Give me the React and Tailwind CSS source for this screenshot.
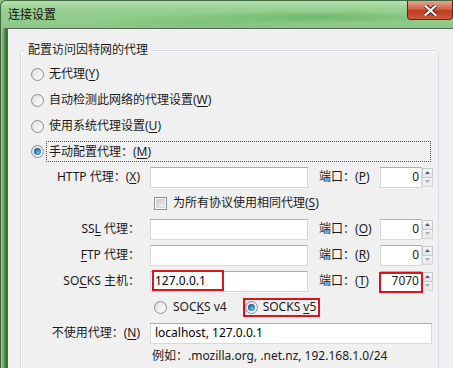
import React from "react";

const U = ({ children }) => <span className="underline underline-offset-[2px]">{children}</span>;

function Radio({ checked }) {
  return (
    <div className="w-[13px] h-[13px] shrink-0 rounded-full border border-[#8e8f8f] bg-[linear-gradient(135deg,#dcdcdc,#f8f8f8)] flex items-center justify-center">
      <div className="w-[9px] h-[9px] rounded-full bg-[linear-gradient(135deg,#e4e4e4,#fbfbfb)] flex items-center justify-center">
        {checked && (
          <div className="w-[7px] h-[7px] rounded-full bg-[radial-gradient(circle_at_60%_65%,#7cc8ef_0%,#2a7fb8_45%,#103d63_100%)]" />
        )}
      </div>
    </div>
  );
}

function Checkbox() {
  return (
    <div className="w-[13px] h-[13px] shrink-0 border border-[#8e8f8f] bg-white flex items-center justify-center">
      <div className="w-[9px] h-[9px] bg-[linear-gradient(135deg,#c9cbce,#eef0f1)] border border-[#d3d5d7]" />
    </div>
  );
}

function TextBox({ children, className = "", w }) {
  return (
    <div
      className={
        "h-[21px] bg-white border border-[#d6d9dd] border-t-[#abadb3] flex items-center pl-[4px] text-[#000] " +
        w +
        " " +
        className
      }
    >
      {children}
    </div>
  );
}

function Spinner() {
  return (
    <div className="w-[11px] h-[19px] flex flex-col ml-auto mr-[0px]">
      <div className="h-[10px] border border-[#c6c9cc] bg-[linear-gradient(#f7f7f7,#e3e5e8)] flex items-center justify-center">
        <svg width="5" height="3" viewBox="0 0 5 3"><path d="M0 3 L2.5 0 L5 3 Z" fill="#4a5f86" /></svg>
      </div>
      <div className="h-[9px] border border-t-0 border-[#d6d8da] bg-[linear-gradient(#f3f3f3,#e8e8e8)] flex items-center justify-center">
        <svg width="5" height="3" viewBox="0 0 5 3"><path d="M0 0 L2.5 3 L5 0 Z" fill="#a8aeb6" /></svg>
      </div>
    </div>
  );
}

function PortBox({ value, red }) {
  return (
    <div className="relative w-[53px] h-[21px] flex items-center">
      <div className="w-[42px] h-[21px] bg-white border border-[#d6d9dd] border-t-[#abadb3] flex items-center justify-end pr-[2px]">
        {value}
      </div>
      <Spinner />
      {red && (
        <div className="absolute left-[-1px] top-[1px] w-[44px] h-[21px] border-2 border-[#d9141c]" />
      )}
    </div>
  );
}

function FieldRow({ label, port, value, red }) {
  return (
    <div className="h-[26px] flex items-center">
      <div className="w-[119px] text-right whitespace-nowrap">{label}</div>
      <div className="ml-[10px] relative">
        <TextBox w="w-[158px]">{red ? "127.0.0.1" : null}</TextBox>
        {red && <div className="absolute left-[2px] top-[-1px] w-[72px] h-[21px] border-2 border-[#d9141c]" />}
      </div>
      <div className="ml-[11px] w-[61px] whitespace-nowrap">端口：{port}</div>
      <PortBox value={value} red={red} />
    </div>
  );
}

export default function App() {
  return (
    <div
      className="w-[453px] h-[368px] overflow-hidden flex flex-col text-[12px] leading-[16px] text-[#1a1a1a] bg-[#8fc98a]"
      style={{ fontFamily: '"Noto Sans", "Noto Sans CJK SC", sans-serif' }}
    >
      {/* Title bar */}
      <div className="h-[28px] shrink-0 flex items-start rounded-tl-[6px] border-l border-t border-[#3f6a3f] bg-[radial-gradient(ellipse_at_70%_60%,#6fb86a_0%,transparent_30%),radial-gradient(ellipse_at_45%_80%,#7ec27a_0%,transparent_35%),linear-gradient(#b9e0b2,#98d092_30%,#8cc887)]">
        <div className="pl-[7px] pt-[6px] text-[#111]">连接设置</div>
        <div className="ml-auto w-[46px] h-[19px] rounded-b-[4px] border border-t-0 border-[#5e2619] bg-[linear-gradient(#e7a592,#d4634a_45%,#c0391f_55%,#cf5a3c)] flex items-center justify-center">
          <svg width="13" height="11" viewBox="0 0 13 11">
            <path d="M1.5 1 L11.5 10 M11.5 1 L1.5 10" stroke="#3b1a12" strokeWidth="4" strokeLinecap="square" />
            <path d="M1.5 1 L11.5 10 M11.5 1 L1.5 10" stroke="#fff" strokeWidth="2.2" strokeLinecap="square" />
          </svg>
        </div>
      </div>

      {/* Body */}
      <div className="flex flex-1 min-h-0">
        <div className="w-[7px] shrink-0 border-l border-[#3c5f3c] bg-[linear-gradient(90deg,#a9d3a3,#6aab65_40%,#3f7a3c_80%,#2d5a2d)]" />
        <div className="flex-1 bg-[#f0f0f0] border-l border-t border-[#5a6b5a] pt-[13px] pl-[12px]">
          <fieldset className="w-[419px] border border-[#d5dfe5] rounded-[3px] shadow-[inset_1px_1px_0_#fff] h-[400px]">
            <legend className="ml-[4px] px-[3px] leading-[16px]">配置访问因特网的代理</legend>
            <div className="pt-[3px]">
              <div className="h-[26px] flex items-center pl-[10px]">
                <Radio />
                <span className="ml-[5px]">无代理(<U>Y</U>)</span>
              </div>
              <div className="h-[26px] flex items-center pl-[10px]">
                <Radio />
                <span className="ml-[5px]">自动检测此网络的代理设置(<U>W</U>)</span>
              </div>
              <div className="h-[26px] flex items-center pl-[10px]">
                <Radio />
                <span className="ml-[5px]">使用系统代理设置(<U>U</U>)</span>
              </div>
              <div className="h-[25px] flex items-center pl-[10px] pr-[7px]">
                <Radio checked />
                <div className="ml-[2px] flex-1 h-[21px] border border-dotted border-[#555] pl-[2px] flex items-center">
                  手动配置代理：(<U>M</U>)
                </div>
              </div>

              <FieldRow label={<>HTTP 代理：(<U>X</U>)</>} port={<>(<U>P</U>)</>} value="0" />

              <div className="h-[26px] flex items-center pl-[133px]">
                <Checkbox />
                <span className="ml-[6px]">为所有协议使用相同代理(<U>S</U>)</span>
              </div>

              <FieldRow label={<>SS<U>L</U> 代理：</>} port={<>(<U>O</U>)</>} value="0" />
              <FieldRow label={<><U>F</U>TP 代理：</>} port={<>(<U>R</U>)</>} value="0" />
              <FieldRow label={<>SO<U>C</U>KS 主机：</>} port={<>(<U>T</U>)</>} value="7070" red />

              <div className="h-[26px] flex items-center pl-[133px]">
                <Radio />
                <span className="ml-[6px]">SOC<U>K</U>S v4</span>
                <div className="ml-[16px] h-[19px] border-2 border-[#d9141c] flex items-center pr-[2px]">
                  <Radio checked />
                  <span className="ml-[5px]">SOCKS <U>v</U>5</span>
                </div>
              </div>

              <div className="h-[26px] flex items-center">
                <div className="w-[119px] text-right whitespace-nowrap">不使用代理：(<U>N</U>)</div>
                <TextBox w="w-[282px]" className="ml-[10px]">localhost, 127.0.0.1</TextBox>
              </div>

              <div className="h-[20px] flex items-center pl-[131px] whitespace-nowrap">
                例如：.mozilla.org, .net.nz, 192.168.1.0/24
              </div>
            </div>
          </fieldset>
        </div>
      </div>
    </div>
  );
}
